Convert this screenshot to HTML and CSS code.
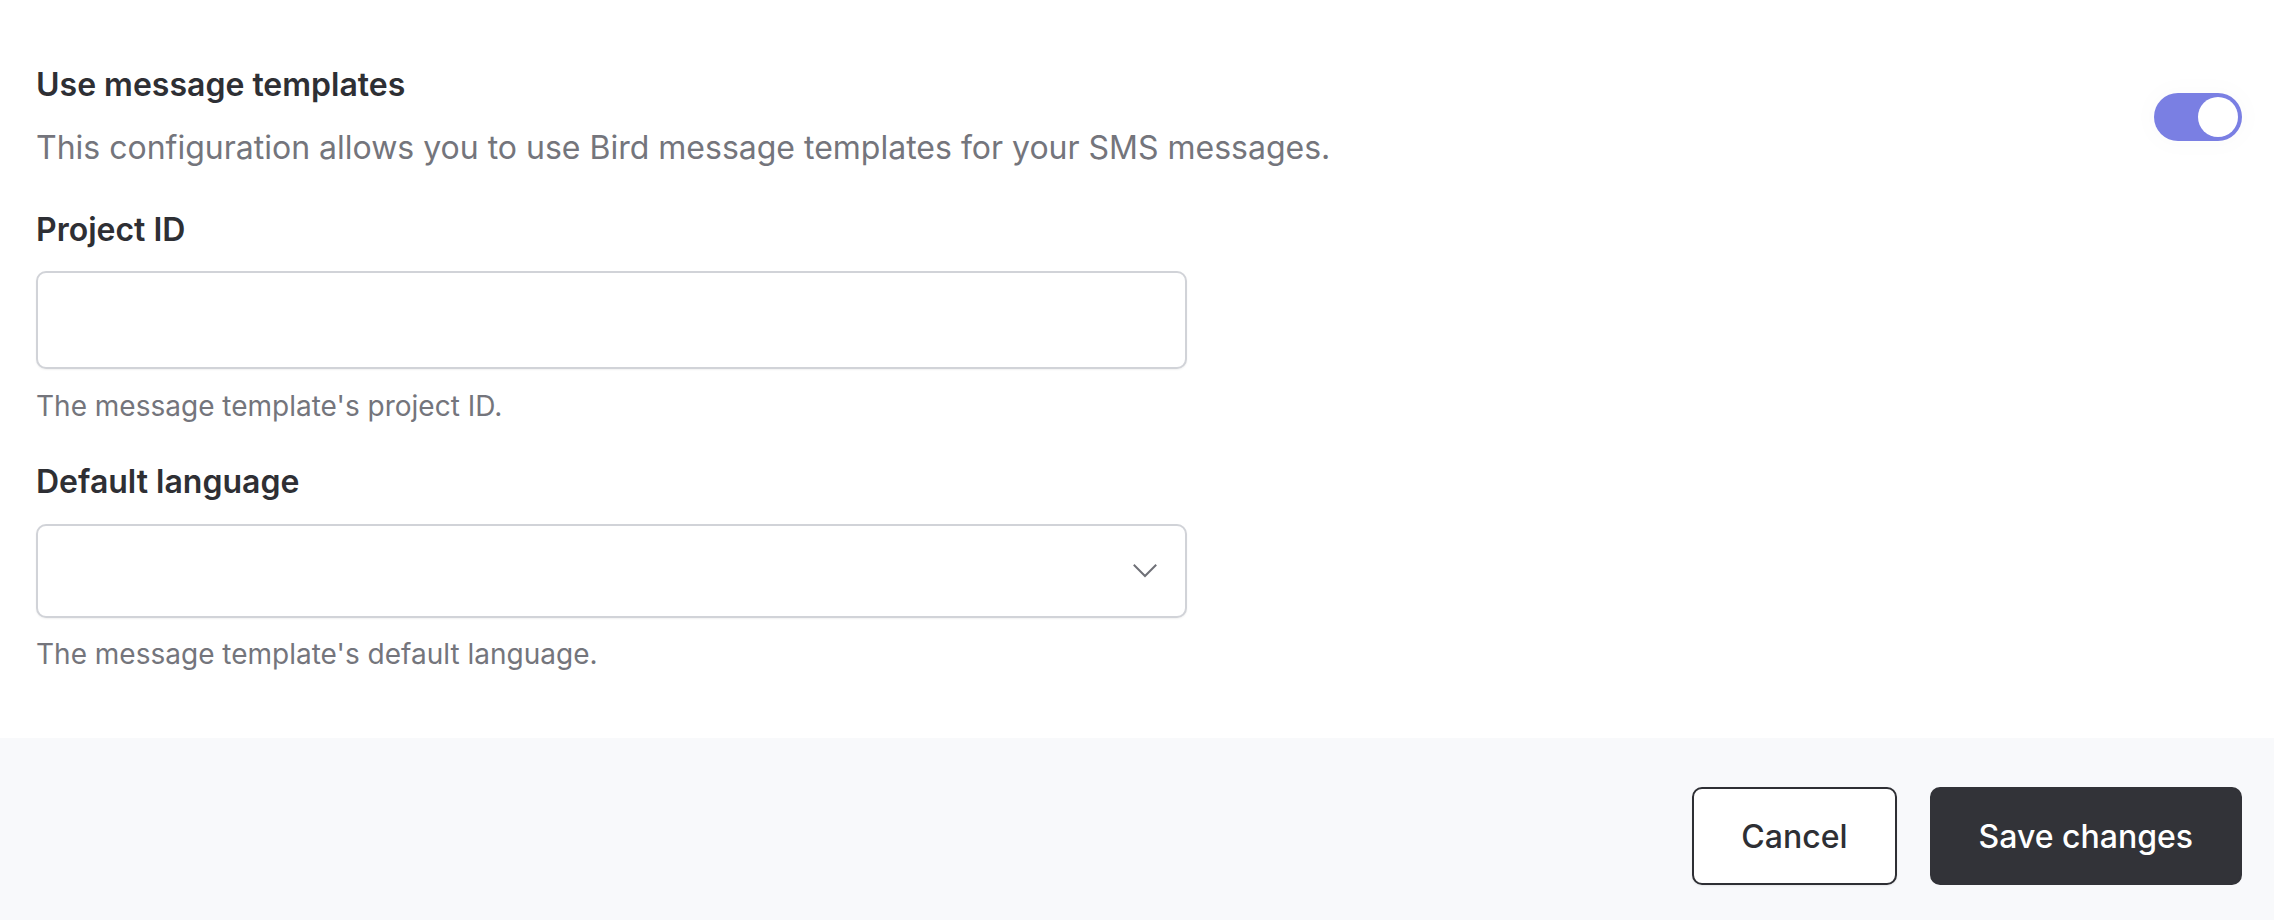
FILE: index.html
```html
<!DOCTYPE html>
<html lang="en">
<head>
<meta charset="utf-8">
<title>Message templates</title>
<link rel="stylesheet" href="styles.css">
</head>
<body>
<div class="page">
  <main class="content">
    <section class="setting-row">
      <div class="setting-text">
        <h2 class="setting-title">Use message templates</h2>
        <p class="setting-desc">This configuration allows you to use Bird message templates for your SMS messages.</p>
      </div>
      <button class="toggle is-on" type="button" aria-pressed="true" aria-label="Use message templates">
        <span class="toggle-knob"></span>
      </button>
    </section>

    <div class="field field-project">
      <label class="field-label" for="project-id">Project ID</label>
      <input class="text-input" id="project-id" type="text">
      <p class="field-help">The message template's project ID.</p>
    </div>

    <div class="field field-language">
      <label class="field-label" for="language">Default language</label>
      <div class="select-box" id="language" tabindex="0">
        <svg class="chevron" width="24" height="14" viewBox="0 0 24 14" aria-hidden="true">
          <path d="M1.5 1.5 L12 12 L22.5 1.5" fill="none" stroke="#6f7077" stroke-width="2" stroke-linecap="square" stroke-linejoin="miter"/>
        </svg>
      </div>
      <p class="field-help">The message template's default language.</p>
    </div>
  </main>

  <footer class="actions">
    <button class="btn btn-secondary" type="button">Cancel</button>
    <button class="btn btn-primary" type="button">Save changes</button>
  </footer>
</div>
</body>
</html>
```

FILE: styles.css
```css
html, body {
  margin: 0;
  padding: 0;
  background: #ffffff;
}

body {
  font-family: Inter, "Noto Sans", "Liberation Sans", sans-serif;
  color: #2e2f34;
  height: 920px;
  overflow: hidden;
}

.page {
  display: flex;
  flex-direction: column;
  height: 920px;
}

.content {
  padding: 63px 32px 0 36px;
  display: flex;
  flex-direction: column;
  height: 738px;
  flex-shrink: 0;
  box-sizing: border-box;
}

.setting-row {
  display: flex;
  align-items: center;
  justify-content: space-between;
}

.setting-title {
  margin: 0;
  font-size: 32px;
  line-height: 44px;
  font-weight: 600;
  color: #2e2f34;
}

.setting-desc {
  margin: 19px 0 0 0;
  font-size: 32px;
  line-height: 44px;
  font-weight: 400;
  color: #74757c;
}

.toggle {
  width: 88px;
  height: 48px;
  border: none;
  border-radius: 24px;
  background: #7a7fe3;
  padding: 4px;
  display: flex;
  justify-content: flex-end;
  align-items: center;
  box-sizing: border-box;
  cursor: pointer;
  box-shadow: 0 0 18px 10px rgba(0, 0, 0, 0.012);
}

.toggle-knob {
  width: 40px;
  height: 40px;
  border-radius: 50%;
  background: #ffffff;
  display: block;
}

.field {
  display: flex;
  flex-direction: column;
  width: 1151px;
}

.field-project {
  margin-top: 38px;
}

.field-language {
  margin-top: 34px;
}

.field-label {
  font-size: 32px;
  line-height: 44px;
  font-weight: 600;
  color: #2e2f34;
}

.text-input {
  margin-top: 19px;
  height: 98px;
  box-sizing: border-box;
  border: 2px solid #d1d3d8;
  border-radius: 10px;
  background: #ffffff;
  box-shadow: 0 1px 2px rgba(0, 0, 0, 0.06);
  font: inherit;
  font-size: 30px;
  padding: 0 24px;
  outline: none;
}

.select-box {
  margin-top: 20px;
  height: 94px;
  box-sizing: border-box;
  border: 2px solid #d1d3d8;
  border-radius: 10px;
  background: #ffffff;
  box-shadow: 0 1px 2px rgba(0, 0, 0, 0.06);
  display: flex;
  align-items: center;
  justify-content: flex-end;
  padding: 0 28px 0 24px;
  outline: none;
}

.chevron {
  display: block;
}

.field-help {
  margin: 17px 0 0 0;
  font-size: 28px;
  line-height: 40px;
  color: #74757c;
}

.field-language .field-help {
  margin-top: 16px;
}

.actions {
  flex: 1;
  background: #f8f9fb;
  display: flex;
  justify-content: flex-end;
  align-items: flex-start;
  gap: 33px;
  padding: 49px 32px 0 0;
}

.btn {
  height: 98px;
  box-sizing: border-box;
  border-radius: 10px;
  font-family: Inter, "Noto Sans", "Liberation Sans", sans-serif;
  font-size: 32px;
  font-weight: 500;
  padding: 0 47px;
  cursor: pointer;
}

.btn-secondary {
  background: #ffffff;
  color: #2e2f34;
  border: 2px solid #2e2f34;
  box-shadow: 0 1px 2px rgba(0, 0, 0, 0.08);
}

.btn-primary {
  background: #323338;
  color: #ffffff;
  border: 2px solid #323338;
}
```
